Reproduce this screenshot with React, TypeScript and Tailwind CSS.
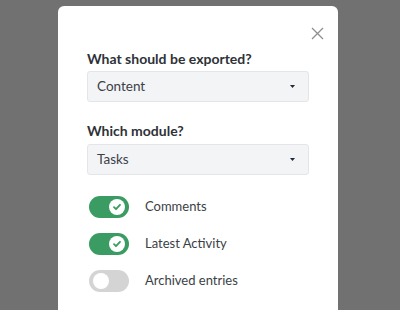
import React, { useState } from 'react';

function Caret() {
  return (
    <svg width="5" height="3" viewBox="0 0 5 3" className="text-gray-800">
      <path d="M0 0h5L2.5 3z" fill="currentColor" />
    </svg>
  );
}

function Select({ value }: { value: string }) {
  return (
    <div className="flex h-[31px] items-center justify-between rounded-[3px] border border-[#e4e5e8] bg-[#f3f4f6] pl-[9px] pr-[13px] text-[13.5px] text-[#3b3f46]">
      <span>{value}</span>
      <Caret />
    </div>
  );
}

function Toggle({ on, label }: { on: boolean; label: string }) {
  return (
    <div className="flex items-center gap-[16px]">
      <div
        className={
          'flex h-[22px] w-[40px] items-center rounded-full px-[4px] ' +
          (on ? 'justify-end bg-[#3a9c62]' : 'justify-start bg-[#d4d4d4]')
        }
      >
        <div className="flex h-[16px] w-[16px] items-center justify-center rounded-full bg-white">
          {on && (
            <svg width="10" height="10" viewBox="0 0 10 10">
              <path d="M2 5.2l2 2 4-4.4" fill="none" stroke="#3a9c62" strokeWidth="1.8" strokeLinecap="round" strokeLinejoin="round" />
            </svg>
          )}
        </div>
      </div>
      <span className="text-[13px] text-[#3b3f46]">{label}</span>
    </div>
  );
}

export default function App() {
  const [items] = useState([
    { label: 'Comments', on: true },
    { label: 'Latest Activity', on: true },
    { label: 'Archived entries', on: false },
  ]);

  return (
    <div className="h-[310px] w-[400px] overflow-hidden bg-[#717171] pt-[6px] font-['Lato',sans-serif]">
      <div className="relative ml-[58px] h-[320px] w-[280px] rounded-[6px] bg-white px-[29px] pt-[43px]">
        <button className="absolute right-[14px] top-[21px] text-[#8e8e8e]">
          <svg width="13" height="13" viewBox="0 0 13 13">
            <path d="M1 1l11 11M12 1L1 12" stroke="currentColor" strokeWidth="1.3" />
          </svg>
        </button>

        <label className="block text-[14px] leading-[20px] font-bold text-[#2e3238]">What should be exported?</label>
        <div className="mt-[2px]">
          <Select value="Content" />
        </div>

        <label className="mt-[19px] block text-[14px] leading-[20px] font-bold text-[#2e3238]">Which module?</label>
        <div className="mt-[3px]">
          <Select value="Tasks" />
        </div>

        <div className="mt-[21px] flex flex-col gap-[15px] pl-[2px]">
          {items.map((it) => (
            <Toggle key={it.label} on={it.on} label={it.label} />
          ))}
        </div>
      </div>
    </div>
  );
}
